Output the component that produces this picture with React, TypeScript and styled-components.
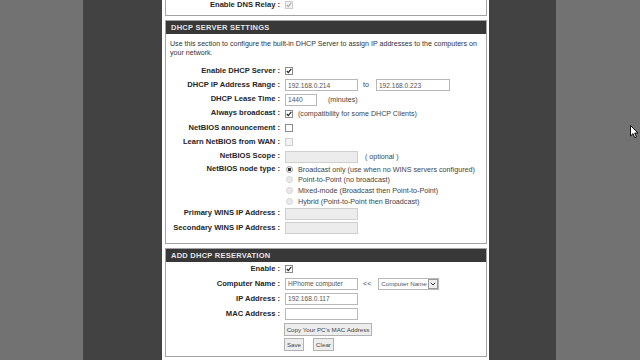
import React from 'react';
import styled, { createGlobalStyle, css } from 'styled-components';

const GlobalStyle = createGlobalStyle`
  html, body {
    margin: 0;
    padding: 0;
    width: 640px;
    height: 360px;
    overflow: hidden;
  }
  body {
    font-family: "Liberation Sans", Arial, sans-serif;
    color: #222;
  }
`;

const Screen = styled.div`
  position: relative;
  display: grid;
  grid-template-columns: 83px 79px 327px 67px 1fr;
  height: 360px;
  overflow: hidden;
`;

const Shade = styled.div<{ $dark?: boolean }>`
  background: ${(p) => (p.$dark ? '#424242' : '#727272')};
`;

const Page = styled.div`
  background: #fff;
  padding: 0 2px 0 3px;
  display: flex;
  flex-direction: column;
  gap: 4px;
  overflow: hidden;
`;

const Box = styled.div<{ $open?: boolean }>`
  border: 1px solid #a3a3a3;
  ${(p) =>
    p.$open &&
    css`
      border-top: none;
    `}
  background: #fff;
  flex-shrink: 0;
`;

const Header = styled.div`
  height: 13px;
  line-height: 13px;
  background: #383838;
  color: #e6e6e6;
  font-weight: bold;
  font-size: 7.5px;
  letter-spacing: 0.25px;
  padding-left: 5px;
`;

const Body = styled.div<{ $top?: number; $bottom?: number }>`
  padding-top: ${(p) => p.$top ?? 0}px;
  padding-bottom: ${(p) => p.$bottom ?? 0}px;
`;

const Intro = styled.p`
  margin: 0 0 6.3px;
  padding: 0 5px 0 4px;
  font-size: 7.1px;
  line-height: 9px;
  color: #333;
`;

const Row = styled.div<{ $h: number; $top?: boolean }>`
  display: grid;
  grid-template-columns: 114px 1fr;
  column-gap: 5px;
  height: ${(p) => p.$h}px;
  align-items: ${(p) => (p.$top ? 'start' : 'center')};
`;

const Label = styled.div`
  text-align: right;
  font-weight: bold;
  font-size: 7.6px;
  line-height: 10.7px;
  white-space: nowrap;
  color: #262626;
`;

const Controls = styled.div`
  display: flex;
  align-items: center;
  font-size: 7.1px;
  color: #444;
  white-space: nowrap;
`;

const Field = styled.input<{ $w?: number }>`
  box-sizing: border-box;
  width: ${(p) => p.$w ?? 73}px;
  height: 12px;
  margin: 0;
  padding: 0 2px;
  border: 1px solid #b8b8b8;
  background: #fff;
  font-family: "Liberation Sans", Arial, sans-serif;
  font-size: 6.6px;
  color: #555;
  outline: none;
  &:disabled {
    background: #ececec;
    border-color: #cfcfcf;
  }
`;

const Note = styled.span<{ $gap: number }>`
  margin-left: ${(p) => p.$gap}px;
  margin-right: ${(p) => p.$gap}px;
`;

const CheckBox = styled.span<{ $off?: boolean }>`
  box-sizing: border-box;
  display: inline-flex;
  width: 8px;
  height: 8px;
  border: 1px solid ${(p) => (p.$off ? '#cdcdcd' : '#8c8c8c')};
  background: ${(p) => (p.$off ? '#f3f3f3' : '#fff')};
  svg {
    display: block;
  }
`;

const Check = ({ checked, off }: { checked?: boolean; off?: boolean }) => (
  <CheckBox $off={off}>
    {checked && (
      <svg width="6" height="6" viewBox="0 0 6 6">
        <path
          d="M0.8 3 L2.3 4.6 L5.3 0.9"
          fill="none"
          stroke={off ? '#a8a8a8' : '#222'}
          strokeWidth="1.2"
        />
      </svg>
    )}
  </CheckBox>
);

const RadioList = styled.div`
  display: flex;
  flex-direction: column;
`;

const RadioLine = styled.div`
  display: flex;
  align-items: center;
  height: 10.7px;
  font-size: 7.2px;
  color: #444;
  white-space: nowrap;
`;

const RadioDot = styled.span<{ $on?: boolean }>`
  box-sizing: border-box;
  width: 7px;
  height: 7px;
  margin: 0 5px 0 1px;
  border-radius: 50%;
  border: 1px solid ${(p) => (p.$on ? '#9a9a9a' : '#d4d4d4')};
  background: ${(p) => (p.$on ? 'radial-gradient(circle, #333 0 1.5px, #f4f4f4 1.6px)' : '#e9e9e9')};
`;

const Select = styled.span`
  box-sizing: border-box;
  display: inline-flex;
  align-items: center;
  width: 61px;
  height: 12px;
  border: 1px solid #b8b8b8;
  font-size: 6.2px;
  color: #555;
  padding-left: 2px;
  overflow: hidden;
`;

const SelectText = styled.span`
  flex: 1;
  overflow: hidden;
`;

const SelectArrow = styled.span`
  box-sizing: border-box;
  flex: 0 0 10px;
  height: 10px;
  border: 1px solid #9a9a9a;
  background: #eee;
  display: flex;
  align-items: center;
  justify-content: center;
`;

const Button = styled.button<{ $w: number }>`
  box-sizing: border-box;
  width: ${(p) => p.$w}px;
  height: 13px;
  margin: 0 10px 0 -1px;
  padding: 0;
  border: 1px solid #b2b2b2;
  border-radius: 0;
  background: #ededed;
  font-family: "Liberation Sans", Arial, sans-serif;
  font-size: 6.2px;
  color: #444;
  white-space: nowrap;
  overflow: hidden;
`;

const Cursor = styled.svg`
  position: absolute;
  left: 630px;
  top: 125px;
`;

const nodeTypes = [
  'Broadcast only (use when no WINS servers configured)',
  'Point-to-Point (no broadcast)',
  'Mixed-mode (Broadcast then Point-to-Point)',
  'Hybrid (Point-to-Point then Broadcast)',
];

const R = 14.3;

export default function App() {
  return (
    <>
      <GlobalStyle />
      <Screen>
        <Shade />
        <Shade $dark />
        <Page>
          <Box $open>
            <Body $bottom={6}>
              <Row $h={9}>
                <Label>Enable DNS Relay :</Label>
                <Controls>
                  <Check checked off />
                </Controls>
              </Row>
            </Body>
          </Box>

          <Box>
            <Header>DHCP SERVER SETTINGS</Header>
            <Body $top={5.5} $bottom={7.6}>
              <Intro>
                Use this section to configure the built-in DHCP Server to assign IP addresses to the computers on
                your network.
              </Intro>
              <Row $h={R}>
                <Label>Enable DHCP Server :</Label>
                <Controls>
                  <Check checked />
                </Controls>
              </Row>
              <Row $h={R}>
                <Label>DHCP IP Address Range :</Label>
                <Controls>
                  <Field defaultValue="192.168.0.214" />
                  <Note $gap={5}>to</Note>
                  <Field $w={74} style={{ marginLeft: 2 }} defaultValue="192.168.0.223" />
                </Controls>
              </Row>
              <Row $h={R}>
                <Label>DHCP Lease Time :</Label>
                <Controls>
                  <Field $w={32} defaultValue="1440" />
                  <Note $gap={11}>(minutes)</Note>
                </Controls>
              </Row>
              <Row $h={R}>
                <Label>Always broadcast :</Label>
                <Controls>
                  <Check checked />
                  <Note $gap={5}>(compatibility for some DHCP Clients)</Note>
                </Controls>
              </Row>
              <Row $h={R}>
                <Label>NetBIOS announcement :</Label>
                <Controls>
                  <Check />
                </Controls>
              </Row>
              <Row $h={R}>
                <Label>Learn NetBIOS from WAN :</Label>
                <Controls>
                  <Check off />
                </Controls>
              </Row>
              <Row $h={R}>
                <Label>NetBIOS Scope :</Label>
                <Controls>
                  <Field disabled />
                  <Note $gap={7}>( optional )</Note>
                </Controls>
              </Row>
              <Row $h={42.8} $top>
                <Label>NetBIOS node type :</Label>
                <RadioList>
                  {nodeTypes.map((t, i) => (
                    <RadioLine key={t}>
                      <RadioDot $on={i === 0} />
                      {t}
                    </RadioLine>
                  ))}
                </RadioList>
              </Row>
              <Row $h={R}>
                <Label>Primary WINS IP Address :</Label>
                <Controls>
                  <Field disabled />
                </Controls>
              </Row>
              <Row $h={R}>
                <Label>Secondary WINS IP Address :</Label>
                <Controls>
                  <Field disabled />
                </Controls>
              </Row>
            </Body>
          </Box>

          <Box>
            <Header>ADD DHCP RESERVATION</Header>
            <Body $bottom={5}>
              <Row $h={14.5}>
                <Label>Enable :</Label>
                <Controls>
                  <Check checked />
                </Controls>
              </Row>
              <Row $h={15}>
                <Label>Computer Name :</Label>
                <Controls>
                  <Field defaultValue="HPhome computer" />
                  <Note $gap={5}>&lt;&lt;</Note>
                  <Select style={{ marginLeft: 2 }}>
                    <SelectText>Computer Name</SelectText>
                    <SelectArrow>
                      <svg width="6" height="4" viewBox="0 0 6 4">
                        <path d="M0.8 0.8 L3 3 L5.2 0.8" fill="none" stroke="#333" strokeWidth="1" />
                      </svg>
                    </SelectArrow>
                  </Select>
                </Controls>
              </Row>
              <Row $h={15}>
                <Label>IP Address :</Label>
                <Controls>
                  <Field defaultValue="192.168.0.117" />
                </Controls>
              </Row>
              <Row $h={15}>
                <Label>MAC Address :</Label>
                <Controls>
                  <Field />
                </Controls>
              </Row>
              <Row $h={16}>
                <span />
                <Controls>
                  <Button $w={88}>Copy Your PC's MAC Address</Button>
                </Controls>
              </Row>
              <Row $h={14}>
                <span />
                <Controls>
                  <Button $w={20}>Save</Button>
                  <Button $w={21}>Clear</Button>
                </Controls>
              </Row>
            </Body>
          </Box>
        </Page>
        <Shade $dark />
        <Shade />
        <Cursor width="9" height="14" viewBox="0 0 9 14">
          <path d="M0.5 0.5 L0.5 11 L3 8.6 L4.8 12.8 L6.4 12.1 L4.7 8 L8 8 Z" fill="#fff" stroke="#000" strokeWidth="0.9" />
        </Cursor>
      </Screen>
    </>
  );
}
